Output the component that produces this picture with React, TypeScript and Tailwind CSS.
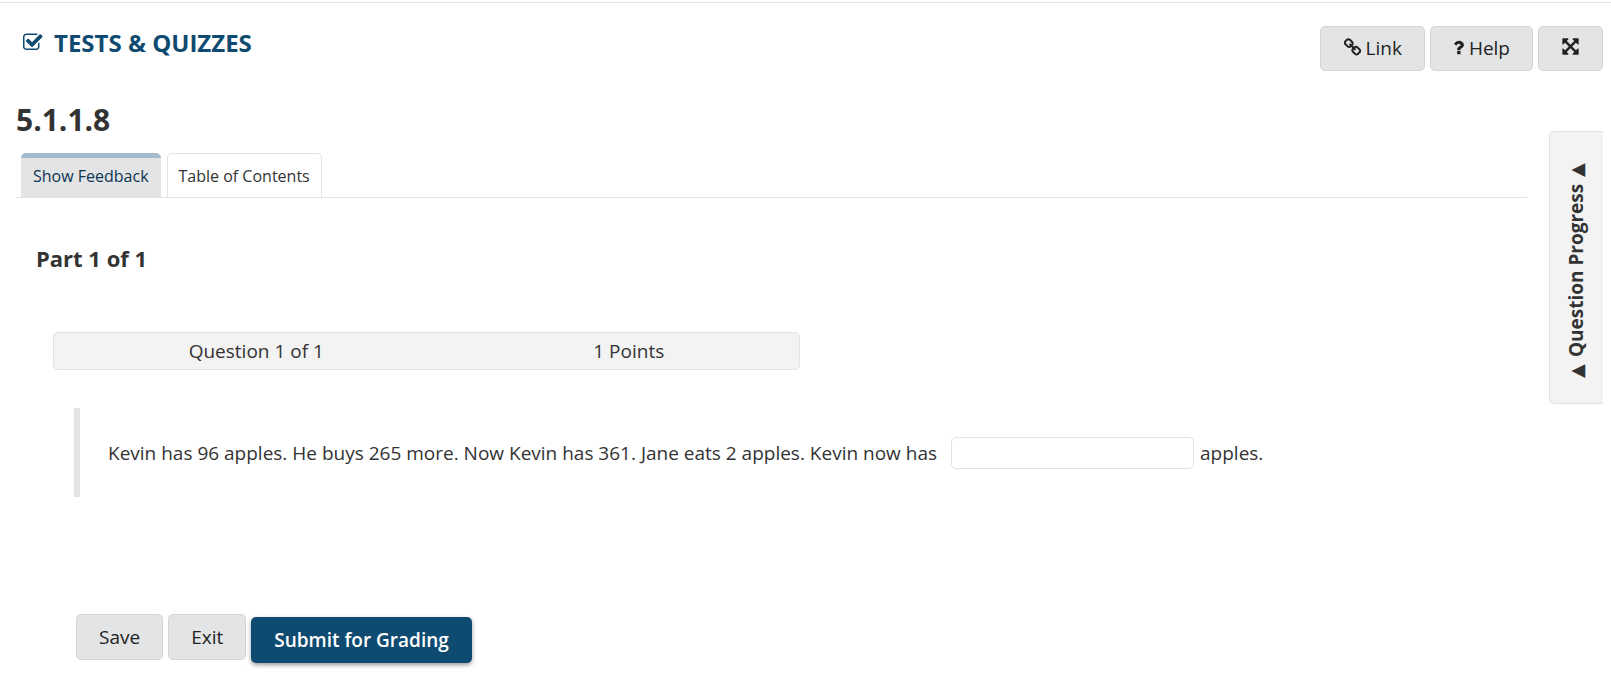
import React from "react";

const paths = {
  check:
    "M1408 930v318q0 119-84.5 203.5t-203.5 84.5h-832q-119 0-203.5-84.5t-84.5-203.5v-832q0-119 84.5-203.5t203.5-84.5h832q63 0 117 25 15 7 18 23 3 17-9 29l-49 49q-10 10-23 10-3 0-9-2-23-6-45-6h-832q-66 0-113 47t-47 113v832q0 66 47 113t113 47h832q66 0 113-47t47-113v-254q0-13 9-22l64-64q10-10 23-10 6 0 12 3 20 8 20 29zm231-489l-814 814q-24 24-57 24t-57-24l-430-430q-24-24-24-57t24-57l110-110q24-24 57-24t57 24l263 263 647-647q24-24 57-24t57 24l110 110q24 24 24 57t-24 57z",
  link: "M1520 1216q0-40-28-68l-208-208q-28-28-68-28-42 0-72 32 3 3 19 18.5t21.5 21.5 15 19 13 25.5 3.5 27.5q0 40-28 68t-68 28q-15 0-27.5-3.5t-25.5-13-19-15-21.5-21.5-18.5-19q-33 31-33 73 0 40 28 68l206 207q27 27 68 27 40 0 68-26l147-146q28-28 28-67zm-703-705q0-40-28-68l-206-207q-28-28-68-28-39 0-68 27l-147 146q-28 28-28 67 0 40 28 68l208 208q27 27 68 27 42 0 72-31-3-3-19-18.5t-21.5-21.5-15-19-13-25.5-3.5-27.5q0-40 28-68t68-28q15 0 27.5 3.5t25.5 13 19 15 21.5 21.5 18.5 19q33-31 33-73zm895 705q0 120-85 203l-147 146q-83 83-203 83-121 0-204-85l-206-207q-83-83-83-203 0-123 88-209l-88-88q-86 88-208 88-120 0-204-84l-208-208q-84-84-84-204t85-203l147-146q83-83 203-83 121 0 204 85l206 207q83 83 83 203 0 123-88 209l88 88q86-88 208-88 120 0 204 84l208 208q84 84 84 204z",
  help: "M1088 1256v240q0 16-12 28t-28 12h-240q-16 0-28-12t-12-28v-240q0-16 12-28t28-12h240q16 0 28 12t12 28zm316-600q0 54-15.5 101t-35 76.5-55 59.5-57.5 43.5-61 35.5q-41 23-68.5 65t-27.5 67q0 17-12 32.5t-28 15.5h-240q-15 0-25.5-18.5t-10.5-37.5v-45q0-83 65-156.5t143-108.5q59-27 84-56t25-76q0-42-46.5-74t-107.5-32q-65 0-108 29-35 25-107 115-13 16-31 16-12 0-25-8l-164-125q-13-10-15.5-25t5.5-28q160-266 464-266 80 0 161 31t146 83 106 127.5 41 158.5z",
  expand:
    "M1411 541l-355 355 355 355 144-144q29-31 70-14 39 17 39 59v448q0 26-19 45t-45 19h-448q-42 0-59-40-17-39 14-69l144-144-355-355-355 355 144 144q31 30 14 69-17 40-59 40h-448q-26 0-45-19t-19-45v-448q0-42 40-59 39-17 69 14l144 144 355-355-355-355-144 144q-19 19-45 19-12 0-24-5-40-17-40-59v-448q0-26 19-45t45-19h448q42 0 59 40 17 39-14 69l-144 144 355 355 355-355-144-144q-31-30-14-69 17-40 59-40h448q26 0 45 19t19 45v448q0 42-39 59-13 5-25 5-26 0-45-19z",
};

function Icon({ d, viewBox = "0 0 1792 1792", className }: { d: string; viewBox?: string; className: string }) {
  return (
    <svg viewBox={viewBox} fill="currentColor" aria-hidden="true" className={className}>
      <path d={d} />
    </svg>
  );
}

const button =
  "flex items-center justify-center rounded-[5px] border border-[#d2d4d5] bg-[#e2e4e6] px-[22px] text-[19px] leading-7 text-[#222]";

const arrow = "mx-[2px] font-['DejaVu_Sans',sans-serif] text-[18px] font-normal";

export default function App() {
  return (
    <div className="mt-[2px] border-t border-[#e0e0e0] bg-white pb-7 font-['Open_Sans',sans-serif] text-[19px] leading-7 text-[#333]">
      <header className="flex items-start justify-between pr-2 pl-[23px] pt-[23px]">
        <h1 className="flex items-center gap-[10px] text-[24px] leading-[34px] font-bold text-[#0f4b70]">
          <Icon d={paths.check} className="mb-[2px] size-[21px] overflow-visible" />
          TESTS &amp; QUIZZES
        </h1>
        <div className="flex gap-[5px]">
          <a href="#link" className={`${button} h-[45px] gap-1 pb-[2px]`}>
            <Icon d={paths.link} className="size-[19px]" />
            Link
          </a>
          <a href="#help" className={`${button} h-[45px] gap-[5px] pb-[2px]`}>
            <Icon d={paths.help} viewBox="384 0 1024 1792" className="h-[19px] w-[11px]" />
            Help
          </a>
          <button type="button" aria-label="Full screen" className={`${button} h-[45px] pb-[4px]`}>
            <Icon d={paths.expand} className="size-[19px]" />
          </button>
        </div>
      </header>

      <div className="flex items-start pt-[28px] pr-2 pl-4">
        <main className="min-w-0 flex-1">
          <h2 className="pt-px text-[30px] leading-10 font-bold">5.1.1.8</h2>
          <nav className="mt-[13px] flex gap-[6px] border-b border-[#e0e2e3] pl-[5px] text-[16px] leading-6">
            <a
              href="#feedback"
              className="h-11 rounded-t-[5px] border-t-[5px] border-[#a5bacb] bg-[#e2e4e6] px-3 pt-[6px] text-[#0d3450]"
            >
              Show Feedback
            </a>
            <a
              href="#contents"
              className="h-11 rounded-t-[5px] border border-b-0 border-[#e0e2e3] px-[11px] pt-[10px]"
            >
              Table of Contents
            </a>
          </nav>

          <h3 className="mt-[44px] ml-5 text-[22px] leading-8 font-bold">Part 1 of 1</h3>

          <div className="mt-[58px] ml-[37px] grid w-full max-w-[747px] grid-cols-2 rounded-[5px] border border-[#e0e2e3] bg-[#f3f3f3] py-1 text-center">
            <span className="pl-8">Question 1 of 1</span>
            <span className="pl-8">1 Points</span>
          </div>

          <form onSubmit={(e) => e.preventDefault()}>
            <div className="mt-[38px] ml-[58px] flex min-h-[89px] items-center border-l-[6px] border-[#e2e4e6] pl-[28px]">
              <label htmlFor="answer">
                Kevin has 96 apples. He buys 265 more. Now Kevin has 361. Jane eats 2 apples. Kevin now has
              </label>
              <input
                id="answer"
                type="text"
                className="mr-[6px] ml-[14px] h-8 w-[243px] rounded-[5px] border border-[#e0e2e3] bg-white px-2"
              />
              <span>apples.</span>
            </div>

            <div className="mt-[117px] ml-[60px] flex items-start gap-[5px]">
              <button type="button" className={`${button} h-[46px]`}>
                Save
              </button>
              <button type="button" className={`${button} h-[46px]`}>
                Exit
              </button>
              <button
                type="submit"
                className="mt-[3px] h-[46px] rounded-[5px] bg-[#0f4b70] px-[23px] font-semibold text-white [box-shadow:0_2px_4px_rgba(0,0,0,0.4)]"
              >
                Submit for Grading
              </button>
            </div>
          </form>
        </main>

        <aside className="mt-[32px] ml-[22px]">
          <button
            type="button"
            className="flex h-[273px] w-[54px] items-center justify-center rounded-l-[5px] border border-r-0 border-[#e0e2e3] bg-[#f3f3f3] pt-[6px] font-bold"
          >
            <span className="rotate-180 whitespace-nowrap [text-orientation:sideways] [writing-mode:vertical-rl]">
              <span className={arrow}>▲</span> Question Progress <span className={arrow}>▲</span>
            </span>
          </button>
        </aside>
      </div>
    </div>
  );
}
